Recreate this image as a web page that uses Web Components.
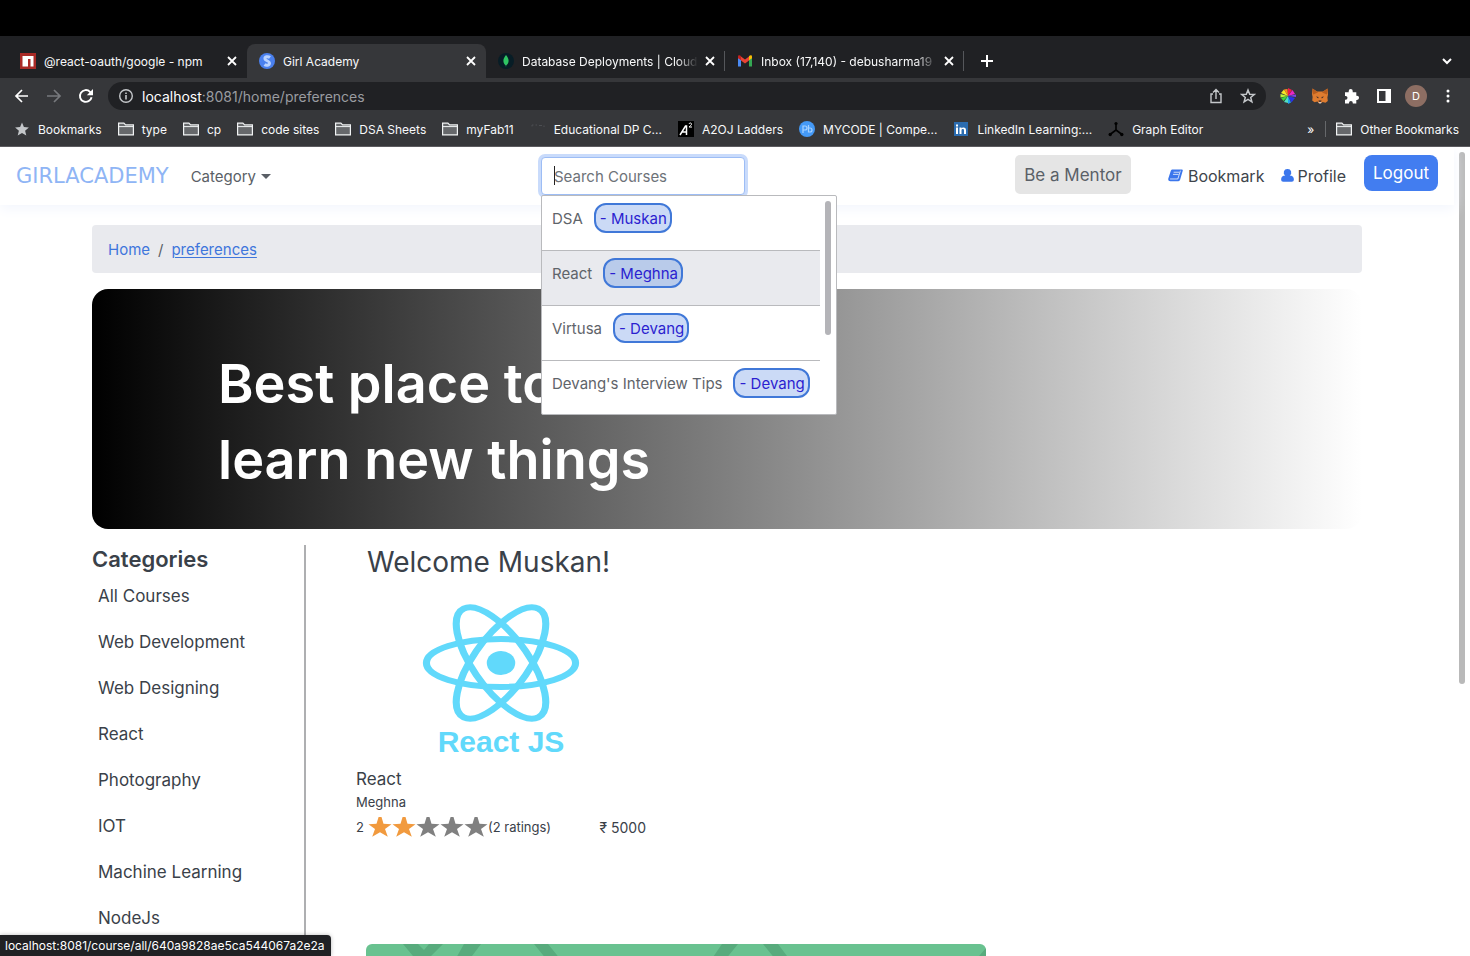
<!DOCTYPE html>
<html lang="en">
<head>
<meta charset="utf-8">
<title>Girl Academy</title>
<style>
  html, body { margin: 0; height: 100%; }
  body { font-family: Inter, "Liberation Sans", sans-serif; background: #fff; overflow: hidden; }
</style>
</head>
<body>
<browser-window></browser-window>

<script>
const define = (name, markup, setup) => {
  const template = document.createElement('template');
  template.innerHTML = markup;
  customElements.define(name, class extends HTMLElement {
    constructor() {
      super();
      this.attachShadow({ mode: 'open' }).append(template.content.cloneNode(true));
    }
    connectedCallback() { if (setup) setup(this, this.shadowRoot); }
  });
};

/* Icon set: [viewBox, drawing] */
const line = 'fill="none" stroke="currentColor" stroke-width="1.8"';
const ICONS = {
  close: ['0 0 16 16', `<path ${line} d="M4 4l8 8M12 4l-8 8"/>`],
  plus: ['0 0 16 16', `<path fill="none" stroke="currentColor" stroke-width="2" d="M8 2v12M2 8h12"/>`],
  chevron: ['0 0 16 16', `<path fill="none" stroke="currentColor" stroke-width="2" d="M4 6l4 4 4-4"/>`],
  back: ['0 0 16 16', `<path fill="none" stroke="currentColor" stroke-width="1.7" d="M14 8H2M8 2L2 8l6 6"/>`],
  forward: ['0 0 16 16', `<path fill="none" stroke="currentColor" stroke-width="1.7" d="M1 8h13M8 2l6 6-6 6"/>`],
  reload: ['0 0 16 16', `<path fill="none" stroke="currentColor" stroke-width="1.9" d="M13.6 9.2A5.9 5.9 0 1 1 12 3.8L14 5.8"/><path fill="currentColor" d="M15 1v6.2H8.8z"/>`],
  info: ['0 0 16 16', `<circle cx="8" cy="8" r="6.3" fill="none" stroke="currentColor" stroke-width="1.4"/><path fill="currentColor" d="M7.2 7h1.6v4.500H7.200zM7.200 4.400h1.600V6H7.200z"/>`],
  share: ['0 0 16 16', `<path fill="none" stroke="currentColor" stroke-width="1.4" d="M5 6H3v8.500h10V6h-2M8 11V2M5 4.500l3-3 3 3"/>`],
  star: ['0 0 16 16', `<path fill="none" stroke="currentColor" stroke-width="1.5" d="M8 2l1.700 4.200 4.500.3-3.500 2.900 1.200 4.400L8 11.400l-3.900 2.400 1.200-4.400L1.800 6.500l4.500-.3z"/>`],
  starfill: ['0 0 16 16', `<path fill="currentColor" d="M8 1.500l1.900 4.600 5 .4-3.800 3.200 1.200 4.800L8 11.900l-4.300 2.600 1.200-4.800L1.100 6.500l5-.4z"/>`],
  folder: ['0 0 16 16', `<path fill="#66686b" stroke="#f1f3f4" stroke-width="1.2" d="M.6 2.200h5.300l1.700 1.700h7.800v10H.6z"/><path stroke="#f1f3f4" d="M1 5.600h14.400"/>`],
  npm: ['0 0 16 16', `<path fill="#a92a26" d="M0 0h16v16H0z"/><path fill="#fff" d="M2.500 3h11v10.500h-3V6H8v7.500H2.500z"/>`],
  site: ['0 0 16 16', `<circle cx="8" cy="8" r="8" fill="#4a80ee"/><path fill="none" stroke="#b9d2ff" stroke-width="3" d="M11 4.500C9 3 5.500 3.500 6 6c.3 1.800 4.500 1.800 4.500 4 0 2.500-3.500 2.800-5 1.500"/>`],
  mongo: ['0 0 16 16', `<circle cx="8" cy="8" r="8" fill="#071d26"/><path fill="#2fc563" d="M8 2c1.700 2 2.600 3.800 2.600 5.700 0 2-1 3.500-2.300 4.500L8 14l-.4-1.800C6.400 11.200 5.400 9.700 5.400 7.700 5.400 5.800 6.400 4 8 2z"/>`],
  gmail: ['0 0 16 16', `<path fill="#4a8af4" d="M1 4v9.500h3V6z"/><path fill="#34a853" d="M12 6v7.500h3V4z"/><path fill="#e94335" d="M4 3.500l4 3 4-3v4l-4 3-4-3z"/><path fill="#c5221f" d="M1 3.500C1 2 3 1.800 4 3.300v4L1 5.200z"/><path fill="#fbbc04" d="M15 3.500c0-1.500-2-1.700-3-.2v4l3-2.100z"/>`],
  wheel: ['0 0 16 16', `<path fill="#f4e828" d="M8 8L1 5l3-3.500z"/><path fill="#ff8a1e" d="M8 8L4 1.500 7.500 1z"/><path fill="#ee1c4a" d="M8 8V0l4 2z"/><path fill="#e827c7" d="M8 8l4.500-6L15 6z"/><path fill="#7c43e8" d="M8 8l8-1.500V9z"/><path fill="#2733e8" d="M8 8l7 2-3.500 4.500z"/><path fill="#20a0ee" d="M8 8l3 6.500L8 16z"/><path fill="#4fe0c3" d="M8 8v7l-4-1z"/><path fill="#3ed83e" d="M8 8l-4.500 5L1 10z"/><path fill="#b7f33c" d="M8 8L.5 9.500V6z"/>`],
  fox: ['0 0 16 16', `<path fill="#df7c2f" d="M.5.500l4.500 3h6l4.500-3 .5 6-.6 3 .4 3.500-2.300 1.700-3-.8L9.500 15h-3l-1-1.600-3 .8L.2 12.500.6 9 0 6z"/><path fill="#b85d1d" d="M.5.500L6 4.500l-5 2zM15.500.500L10 4.500l5 2z"/><path fill="#36272b" d="M4 8.500l2.500.6-.3 1.400zM12 8.500l-2.500.6.3 1.400zM6.500 12.500h3l-.4 1.300H6.900z"/><path fill="#d9c7b8" d="M6.500 14h3L9 15.500H7z"/>`],
  puzzle: ['0 0 16 16', `<path fill="currentColor" d="M1 4.200h3.700V3a2 2 0 0 1 4 0v1.200h3.600v3.600h.7a2 2 0 0 1 0 4.100h-.7v3.600H8.800v-.6a1.900 1.900 0 0 0-3.800 0v.6H1v-3.800h.6a1.900 1.900 0 0 0 0-3.800H1z"/>`],
  panel: ['0 0 16 16', `<path fill="none" stroke="currentColor" stroke-width="2" d="M2 2h12v12H2z"/><path fill="currentColor" d="M9.500 2H14v12H9.500z"/>`],
  dots: ['0 0 16 16', `<g fill="currentColor"><circle cx="8" cy="3" r="1.5"/><circle cx="8" cy="8" r="1.5"/><circle cx="8" cy="13" r="1.5"/></g>`],
  spinner: ['0 0 16 16', `<path fill="none" stroke="#4c4e52" stroke-width="1" stroke-dasharray="3 2" d="M2 5.500V4h5M9 4.500h5V6"/>`],
  ladders: ['0 0 16 16', `<path d="M0 0h16v16H0z"/><path fill="none" stroke="#fff" stroke-width="1.5" d="M2 14L7.500 5h1v9M4.500 11H9"/><path fill="none" stroke="#fff" d="M11 3c.4-1.500 2.800-1.300 2.500.3-.2 1-1.500 1.600-2.500 2.700h3"/>`],
  mycode: ['0 0 16 16', `<circle cx="8" cy="8" r="8" fill="#4499f6"/><path fill="none" stroke="#a8d2ff" stroke-width="1.2" d="M4 12V5h2a2 2 0 0 1 0 4H4M9.500 4v7h1.500a2 2 0 0 0 0-4H9.500"/>`],
  linkedin: ['0 0 16 16', `<rect x="1" y="1" width="14" height="14" fill="#2b6cb0"/><path fill="#fff" d="M3 6.500h2V13H3zM3 3.500h2v2H3zM6.500 6.500h2v1C9.300 6 13 5.800 13 9v4h-2V9.500c0-2-2.500-1.700-2.500 0V13h-2z"/>`],
  graph: ['0 0 16 16', `<path fill="none" stroke="#000" stroke-width="1.6" d="M8 3v6L2 13.500M8 9l6 4.500"/><g><circle cx="8" cy="2.500" r="1.600"/><circle cx="2.200" cy="13.500" r="1.700"/><circle cx="13.800" cy="13.500" r="1.700"/></g>`],
  book: ['0 0 16 16', `<path fill="currentColor" d="M5 1.500h9.500c1 0 1.500.6 1.200 1.500l-2.800 9.500c-.3 1-.8 1.500-1.800 1.500H2.500C.8 14-.2 12.500.4 11L3 3c.4-1 1-1.500 2-1.500z"/><path fill="none" stroke="#fff" stroke-width=".8" d="M6 4.500h6M5.300 6.800h6M2.200 11.700h8.300l2.700-8.800"/>`],
  user: ['0 0 16 16', `<path fill="currentColor" d="M8 1a3.800 3.800 0 0 1 2.400 6.900C13 8 14.800 9.500 14.800 12c0 1.800-.8 2.700-2.300 2.700h-9C2 14.700 1.200 13.800 1.200 12c0-2.500 1.800-4 4.400-4.100A3.800 3.800 0 0 1 8 1z"/>`],
  rating: ['0 0 24 20', `<path fill="currentColor" d="M10.600 0h2.900l2 6.800 8 .4-6.500 4.800 2.800 7.800L12 15.200l-7.800 4.600L7 12 .5 7.200l8-.4z"/>`],
};

define('ui-icon', `
  <style>
    :host { display: block; flex: none; width: 16px; height: 16px; }
    svg { display: block; width: 100%; height: 100%; }
  </style><svg aria-hidden="true"></svg>`,
  (host, root) => {
    const [box, drawing] = ICONS[host.getAttribute('name')];
    const svg = root.querySelector('svg');
    svg.setAttribute('viewBox', box);
    svg.innerHTML = drawing;
  });

define('browser-tab', `
  <style>
    :host { display: flex; box-sizing: border-box; flex: 0 1 239px; min-width: 0; height: 34px; align-items: center;
      gap: 8px; padding: 0 7px 0 12px; font-size: 12px; color: #f8f9fa; }
    :host([active]) { background: #36373a; border-radius: 8px 8px 0 0; }
    :host([divided]) { background: linear-gradient(#55575b, #55575b) right center / 1px 20px no-repeat; }
    span { flex: 1; overflow: hidden; white-space: nowrap; margin-right: -4px; }
    :host([divided]) span { mask-image: linear-gradient(90deg, #000 88%, transparent); }
    button { border: 0; padding: 0; background: none; color: inherit; }
    ui-icon { color: #fff; }
  </style>
  <slot name="icon"></slot><span><slot></slot></span>
  <button aria-label="Close tab"><ui-icon name="close"></ui-icon></button>`);

define('tab-strip', `
  <style>
    :host { display: flex; background: #202124; height: 34px; padding: 8px 15px 0 8px; align-items: center; }
    button { display: grid; border: 0; padding: 0; background: none; color: #fff; margin-left: 15px; }
    button:last-child { margin-left: auto; }
  </style>
  <browser-tab><ui-icon slot="icon" name="npm"></ui-icon>@react-oauth/google - npm</browser-tab>
  <browser-tab active><ui-icon slot="icon" name="site"></ui-icon>Girl Academy</browser-tab>
  <browser-tab divided><ui-icon slot="icon" name="mongo"></ui-icon>Database Deployments | Cloud</browser-tab>
  <browser-tab divided><ui-icon slot="icon" name="gmail"></ui-icon>Inbox (17,140) - debusharma19</browser-tab>
  <button aria-label="New tab"><ui-icon name="plus"></ui-icon></button>
  <button aria-label="Search tabs"><ui-icon name="chevron"></ui-icon></button>`);

define('address-bar', `
  <style>
    :host { display: flex; height: 36px; align-items: center; background: #36373a; padding: 0 6px; color: #fff; }
    button { display: grid; place-items: center; flex: none; width: 32px; height: 28px; border: 0; padding: 0; background: none; color: inherit; font: inherit; }
    .off { color: #77797d; }
    .pill { flex: 1; display: flex; align-items: center; height: 28px; margin: 0 6px; padding: 0 2px 0 10px; border-radius: 14px; background: #202124; color: #c4c7ca; }
    .url { flex: 1; margin-left: 8px; font-size: 14px; color: #9a9ca0; }
    .url b { font-weight: 400; color: #fff; }
    .avatar { display: grid; place-items: center; width: 22px; height: 22px; border-radius: 50%; background: #8d6e63; font-size: 11px; }
  </style>
  <button aria-label="Back"><ui-icon name="back"></ui-icon></button>
  <button class="off" aria-label="Forward"><ui-icon name="forward"></ui-icon></button>
  <button aria-label="Reload"><ui-icon name="reload"></ui-icon></button>
  <div class="pill">
    <ui-icon name="info"></ui-icon>
    <div class="url"><b>localhost</b>:8081/home/preferences</div>
    <button aria-label="Share"><ui-icon name="share"></ui-icon></button>
    <button aria-label="Bookmark this page"><ui-icon name="star"></ui-icon></button>
  </div>
  <button aria-label="Colours"><ui-icon name="wheel"></ui-icon></button>
  <button aria-label="Wallet"><ui-icon name="fox"></ui-icon></button>
  <button aria-label="Extensions"><ui-icon name="puzzle"></ui-icon></button>
  <button aria-label="Side panel"><ui-icon name="panel"></ui-icon></button>
  <button aria-label="Account"><span class="avatar">D</span></button>
  <button aria-label="Menu"><ui-icon name="dots"></ui-icon></button>`);

define('book-mark', `
  <style>
    :host { display: block; flex: none; }
    a { display: flex; align-items: center; gap: 8px; color: #f8f9fa; text-decoration: none; white-space: nowrap; }
    ui-icon { color: #c4c7ca; }
  </style>
  <a href="#"><ui-icon name="folder"></ui-icon><slot></slot></a>`,
  (host, root) => {
    const icon = document.createElement('ui-icon');
    icon.setAttribute('name', host.getAttribute('icon') || 'folder');
    root.querySelector('ui-icon').replaceWith(icon);
  });

define('bookmarks-bar', `
  <style>
    :host { display: flex; align-items: center; gap: 16px; height: 30px; padding: 0 11px 2px 14px; background: #36373a;
      border-bottom: 1px solid #5c5b5f; font-size: 12px; color: #fff; }
    .more { margin-left: auto; border: 0; padding: 0; background: none; color: inherit; font: inherit; }
    .other { border-left: 1px solid #66686b; padding-left: 10px; margin-left: -5px; }
  </style>
  <book-mark icon="starfill">Bookmarks</book-mark>
  <book-mark>type</book-mark>
  <book-mark>cp</book-mark>
  <book-mark>code sites</book-mark>
  <book-mark>DSA Sheets</book-mark>
  <book-mark>myFab11</book-mark>
  <book-mark icon="spinner">Educational DP C...</book-mark>
  <book-mark icon="ladders">A2OJ Ladders</book-mark>
  <book-mark icon="mycode">MYCODE | Compe...</book-mark>
  <book-mark icon="linkedin">LinkedIn Learning:...</book-mark>
  <book-mark icon="graph">Graph Editor</book-mark>
  <button class="more">»</button>
  <book-mark class="other">Other Bookmarks</book-mark>`);

define('course-option', `
  <style>
    :host { display: block; border-bottom: 1px solid #b9babd; }
    :host(:last-child) { border-bottom: 0; }
    :host([active]) { background: #e9eaee; }
    a { display: flex; align-items: flex-start; gap: 11px; height: 47px; padding: 7px 0 0 10px; color: #5f646a; text-decoration: none; font-size: 15px; line-height: 32px; white-space: nowrap; }
    .by { box-sizing: border-box; height: 30px; line-height: 28px; padding: 0 3px 0 4px; border: 2px solid #4078d8; border-radius: 12px; background: #cbdaf6; color: #2b1fd0; }
    :host([active]) .by { background: #b9cbea; }
  </style>
  <a href="#"><slot></slot><span class="by">- <slot name="by"></slot></span></a>`);

define('course-search', `
  <style>
    :host { display: block; position: relative; }
    input { box-sizing: border-box; display: block; width: 100%; height: 38px; padding: 0 12px; border: 1px solid #9dbdf5; border-radius: 4px;
      outline: 0; box-shadow: 0 0 0 3px #c9dbfb; font: 15px Inter, sans-serif; color: #5f646a; background: #fff; }
    input::placeholder { color: #6d7278; opacity: 1; }
    .caret { position: absolute; left: 13px; top: 9px; width: 1px; height: 19px; background: #222; }
    .menu { position: absolute; z-index: 2; top: 38px; left: 0; width: 294px; display: flex; background: #fff; border: 1px solid #b9babd; border-radius: 2px; }
    .list { flex: 1; height: 218px; overflow: hidden; }
    .bar { width: 6px; height: 134px; margin: 5px; border-radius: 3px; background: #b4b4b8; }
  </style>
  <input type="search" placeholder="Search Courses" aria-label="Search Courses"><i class="caret"></i>
  <div class="menu">
    <div class="list">
      <course-option>DSA<span slot="by">Muskan</span></course-option>
      <course-option active>React<span slot="by">Meghna</span></course-option>
      <course-option>Virtusa<span slot="by">Devang</span></course-option>
      <course-option>Devang's Interview Tips<span slot="by">Devang</span></course-option>
    </div>
    <div class="bar"></div>
  </div>`);

define('site-nav', `
  <style>
    :host { display: grid; grid-template-columns: 525px 204px 1fr; height: 58px; box-sizing: border-box; align-items: center;
      padding: 0 16px; position: relative; z-index: 1; background: #fff; box-shadow: 0 4px 12px #f3f6fd; color: #3e444b; }
    .left, .right { display: flex; align-items: center; }
    a { text-decoration: none; color: inherit; }
    .brand { font: 21px "DejaVu Sans", sans-serif; color: #8fb5f5; }
    button { border: 0; padding: 0; background: none; font: inherit; color: inherit; }
    .cat { display: flex; align-items: center; gap: 5px; margin-left: 22px; font-size: 15px; color: #5a5f66; }
    .cat::after { content: ""; border: 5px solid transparent; border-top-color: currentColor; border-bottom: 0; }
    .right { justify-content: flex-end; align-items: flex-start; height: 42px; font-size: 17px; }
    .mentor { height: 39px; width: 116px; border-radius: 5px; background: #e5e5e5; color: #5a6067; }
    .link { display: flex; align-items: center; gap: 5px; height: 41px; font-size: 16px; }
    .link ui-icon { color: #3b76ec; width: 15px; height: 15px; }
    .first { margin-left: 37px; } .second { margin-left: 16px; gap: 2px; }
    .logout { width: 74px; height: 36px; margin-left: 18px; border-radius: 8px; background: #427df0; color: #fff; }
  </style>
  <div class="left"><a class="brand" href="#">GIRLACADEMY</a><button class="cat">Category</button></div>
  <course-search></course-search>
  <div class="right">
    <button class="mentor">Be a Mentor</button>
    <a class="link first" href="#"><ui-icon name="book"></ui-icon>Bookmark</a>
    <a class="link second" href="#"><ui-icon name="user"></ui-icon>Profile</a>
    <button class="logout">Logout</button>
  </div>`);

define('bread-crumb', `
  <style>
    :host { display: flex; align-items: center; gap: 8px; height: 48px; padding: 0 16px; background: #e9eaee; border-radius: 4px; font-size: 15px; color: #5a5f66; }
    a { color: #3f76dc; text-decoration: none; }
    a:last-child { text-decoration: underline; text-underline-offset: 2px; }
  </style>
  <a href="#">Home</a><span>/</span><a href="#">preferences</a>`);

define('hero-banner', `
  <style>
    :host { display: flex; align-items: center; box-sizing: border-box; height: 240px; padding: 26px 126px 0; border-radius: 16px; background: linear-gradient(90deg, #000, #fff); color: #fff; }
    h1 { margin: 0; font-size: 54px; line-height: 76px; font-weight: 600; width: 480px; }
  </style>
  <h1><slot></slot></h1>`);

define('category-list', `
  <style>
    :host { display: block; box-sizing: border-box; width: 214px; flex: none; border-right: 2px solid #aeafb1; color: #3a4149; }
    h2 { margin: 0; font-size: 22px; line-height: 28px; font-weight: 600; }
    ul { margin: 0; padding: 0 0 0 6px; list-style: none; }
    a { display: block; height: 46px; line-height: 46px; font-size: 17px; color: inherit; text-decoration: none; }
  </style>
  <h2>Categories</h2>
  <ul>
    <li><a href="#">All Courses</a></li><li><a href="#">Web Development</a></li><li><a href="#">Web Designing</a></li>
    <li><a href="#">React</a></li><li><a href="#">Photography</a></li><li><a href="#">IOT</a></li>
    <li><a href="#">Machine Learning</a></li><li><a href="#">NodeJs</a></li>
  </ul>`);

define('course-card', `
  <style>
    :host { display: block; width: 290px; color: #3a4149; }
    .cover { display: block; width: 160px; height: 164px; margin: 0 auto; }
    h3 { margin: 4px 0 0; font-size: 17px; line-height: 23px; font-weight: 400; }
    p { margin: 0; font-size: 13px; line-height: 23px; }
    .row { display: flex; align-items: center; height: 26px; font-size: 13px; }
    .stars { display: flex; margin-left: 4px; color: #808080; }
    .stars ui-icon { width: 24px; height: 20px; }
    .stars .on { color: #f19a3e; }
    .price { margin-left: auto; font-size: 14px; }
  </style>
  <svg class="cover" viewBox="0 0 160 164" role="img" aria-label="React JS">
    <g transform="translate(80 63) scale(6.78 5.7)" fill="none" stroke="#61d9fb" stroke-width="1.05">
      <ellipse rx="11" ry="4.2"/>
      <ellipse rx="11" ry="4.2" transform="rotate(60)"/>
      <ellipse rx="11" ry="4.2" transform="rotate(-60)"/>
      <circle r="2.1" fill="#61d9fb" stroke="none"/>
    </g>
    <text x="80" y="152" text-anchor="middle" font-family="Liberation Sans" font-weight="700" font-size="30" fill="#61d9fb">React JS</text>
  </svg>
  <h3>React</h3>
  <p>Meghna</p>
  <div class="row">2
    <span class="stars"><ui-icon class="on" name="rating"></ui-icon><ui-icon class="on" name="rating"></ui-icon><ui-icon name="rating"></ui-icon><ui-icon name="rating"></ui-icon><ui-icon name="rating"></ui-icon></span>
    <span>(2 ratings)</span><span class="price">₹ 5000</span>
  </div>`);

define('promo-banner', `
  <style>
    :host { display: block; max-width: 620px; height: 200px; border-radius: 6px; overflow: hidden; background: #69c290; }
    svg { display: block; }
  </style>
  <svg width="620" height="200" viewBox="0 0 620 200" aria-hidden="true">
    <g fill="#58ab7d"><path d="M37 0h15l6 6 5-6h14L59 18H52zM98 0h17L103 16H89zM168 0h14l13 16h-14zM356 0h16l-13 16h-14zM397 0h15l12 16h-14zM620 4v14h-12z"/></g>
  </svg>`);

define('home-page', `
  <style>
    :host { display: flex; flex: 1; min-height: 0; overflow: hidden; background: #fff; }
    .page { flex: 1; min-width: 0; }
    main { padding: 20px 92px 0; display: grid; gap: 16px; }
    .cols { display: flex; }
    section { flex: 1; padding-left: 50px; }
    h2 { margin: 0 0 21px 11px; font-size: 28px; line-height: 34px; font-weight: 400; color: #3a4149; }
    promo-banner { margin: 104px 0 0 10px; }
    .thumb { width: 6px; height: 532px; margin: 5px; border-radius: 3px; background: #b9b9b9; }
  </style>
  <div class="page">
    <site-nav></site-nav>
    <main>
      <bread-crumb></bread-crumb>
      <hero-banner>Best place to learn new things</hero-banner>
      <div class="cols">
        <category-list></category-list>
        <section>
          <h2>Welcome Muskan!</h2>
          <course-card></course-card>
          <promo-banner></promo-banner>
        </section>
      </div>
    </main>
  </div>
  <div class="thumb"></div>`);

define('browser-window', `
  <style>
    :host { display: flex; flex-direction: column; height: 100vh; box-sizing: border-box; border-top: 36px solid #000; overflow: hidden; position: relative; }
    tab-strip, address-bar, bookmarks-bar { flex: none; }
    .status { position: absolute; left: 0; bottom: 0; z-index: 3; padding: 0 6px 0 5px; line-height: 21px; border-radius: 0 4px 0 0;
      background: #202124; color: #fff; font-size: 12px; box-shadow: 0 0 4px #0004; }
  </style>
  <tab-strip></tab-strip>
  <address-bar></address-bar>
  <bookmarks-bar></bookmarks-bar>
  <home-page></home-page>
  <div class="status">localhost:8081/course/all/640a9828ae5ca544067a2e2a</div>`);
</script>
</body>
</html>
